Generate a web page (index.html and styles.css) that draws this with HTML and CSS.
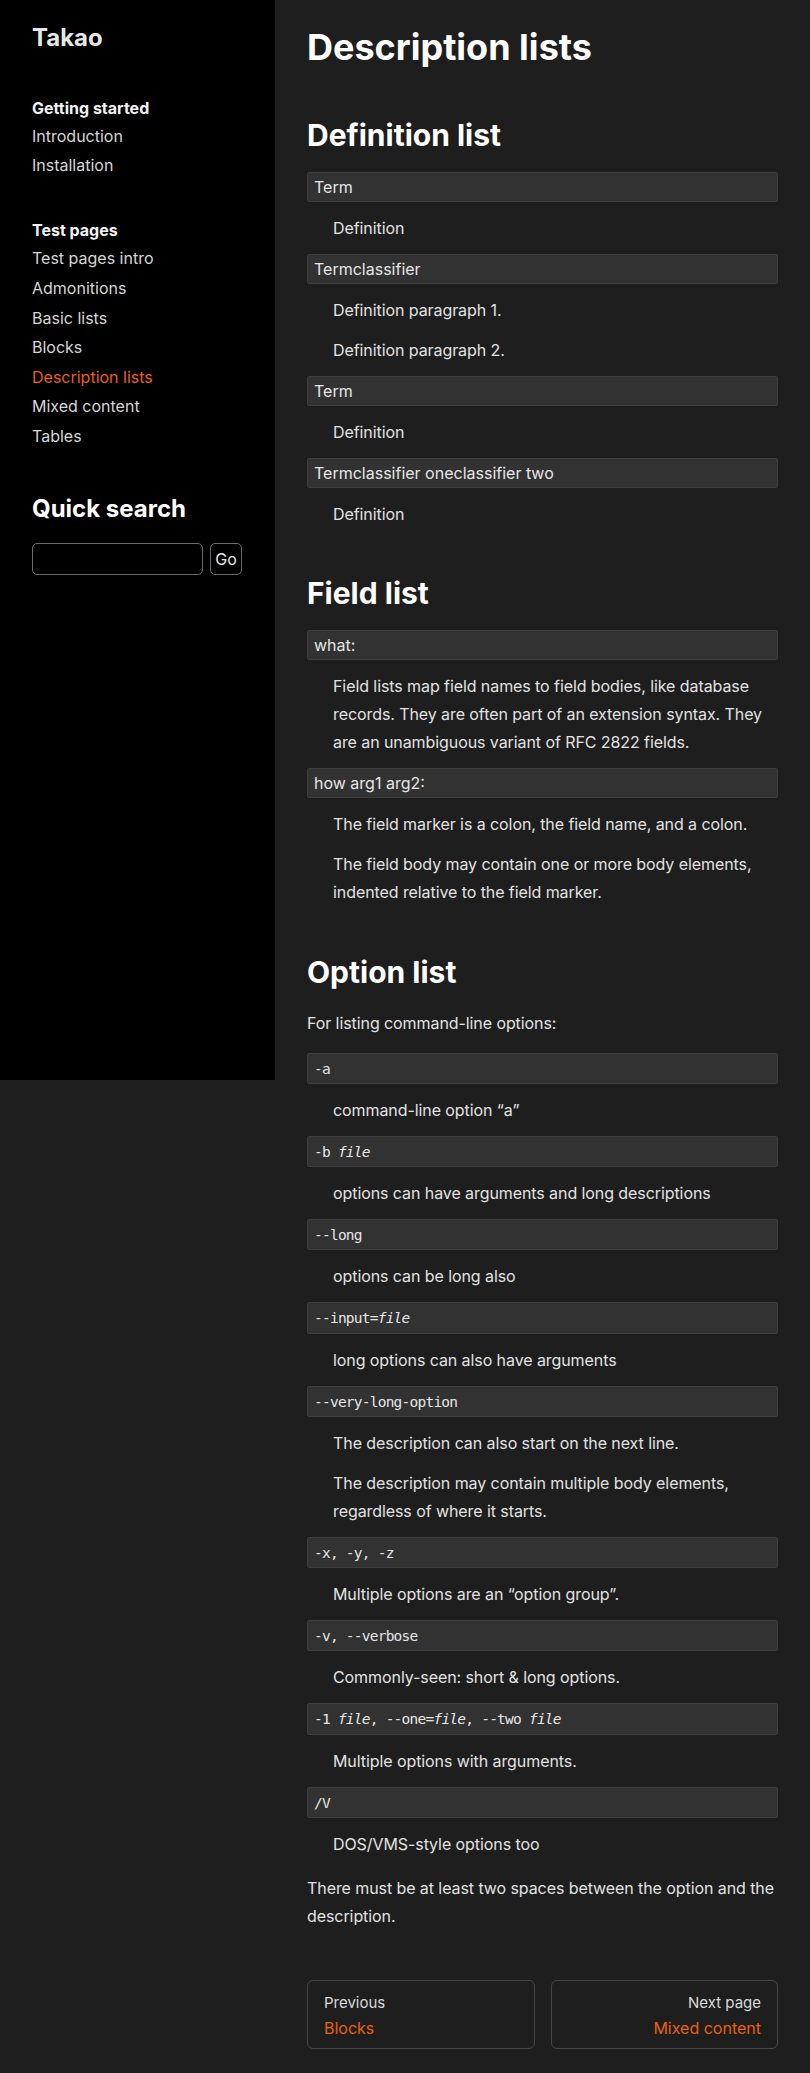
FILE: index.html
```html
<!DOCTYPE html>
<html lang="en">
<head>
<meta charset="utf-8">
<title>Description lists - Takao</title>
<link rel="stylesheet" href="styles.css">
</head>
<body>
<div class="layout">
  <aside class="sidebar">
    <div class="brand">Takao</div>
    <nav class="side-nav">
      <div class="nav-group">
        <p class="caption">Getting started</p>
        <ul class="nav-list">
          <li><a href="#">Introduction</a></li>
          <li><a href="#">Installation</a></li>
        </ul>
      </div>
      <div class="nav-group">
        <p class="caption">Test pages</p>
        <ul class="nav-list">
          <li><a href="#">Test pages intro</a></li>
          <li><a href="#">Admonitions</a></li>
          <li><a href="#">Basic lists</a></li>
          <li><a href="#">Blocks</a></li>
          <li><a href="#" class="current">Description lists</a></li>
          <li><a href="#">Mixed content</a></li>
          <li><a href="#">Tables</a></li>
        </ul>
      </div>
    </nav>
    <h3 class="search-title">Quick search</h3>
    <form class="search">
      <input class="search-input" type="text" aria-label="Search">
      <button class="search-btn" type="button">Go</button>
    </form>
  </aside>

  <main class="content">
    <h1>Description lists</h1>

    <h2>Definition list</h2>
    <dl class="dlist">
      <dt>Term</dt>
      <dd><p>Definition</p></dd>
      <dt>Termclassifier</dt>
      <dd><p>Definition paragraph 1.</p><p>Definition paragraph 2.</p></dd>
      <dt>Term</dt>
      <dd><p>Definition</p></dd>
      <dt>Termclassifier oneclassifier two</dt>
      <dd><p>Definition</p></dd>
    </dl>

    <h2>Field list</h2>
    <dl class="dlist">
      <dt>what:</dt>
      <dd><p>Field lists map field names to field bodies, like database records. They are often part of an extension syntax. They are an unambiguous variant of RFC 2822 fields.</p></dd>
      <dt>how arg1 arg2:</dt>
      <dd><p>The field marker is a colon, the field name, and a colon.</p><p>The field body may contain one or more body elements, indented relative to the field marker.</p></dd>
    </dl>

    <h2>Option list</h2>
    <p>For listing command-line options:</p>
    <dl class="dlist options">
      <dt><code>-a</code></dt>
      <dd><p>command-line option “a”</p></dd>
      <dt><code>-b <var>file</var></code></dt>
      <dd><p>options can have arguments and long descriptions</p></dd>
      <dt><code>--long</code></dt>
      <dd><p>options can be long also</p></dd>
      <dt><code>--input=<var>file</var></code></dt>
      <dd><p>long options can also have arguments</p></dd>
      <dt><code>--very-long-option</code></dt>
      <dd><p>The description can also start on the next line.</p><p>The description may contain multiple body elements, regardless of where it starts.</p></dd>
      <dt><code>-x, -y, -z</code></dt>
      <dd><p>Multiple options are an “option group”.</p></dd>
      <dt><code>-v, --verbose</code></dt>
      <dd><p>Commonly-seen: short &amp; long options.</p></dd>
      <dt><code>-1 <var>file</var>, --one=<var>file</var>, --two <var>file</var></code></dt>
      <dd><p>Multiple options with arguments.</p></dd>
      <dt><code>/V</code></dt>
      <dd><p>DOS/VMS-style options too</p></dd>
    </dl>
    <p>There must be at least two spaces between the option and the description.</p>

    <nav class="pager">
      <a class="pager-link prev" href="#">
        <span class="pager-label">Previous</span>
        <span class="pager-title">Blocks</span>
      </a>
      <a class="pager-link next" href="#">
        <span class="pager-label">Next page</span>
        <span class="pager-title">Mixed content</span>
      </a>
    </nav>
  </main>
</div>
</body>
</html>
```

FILE: styles.css
```css
html, body {
  margin: 0;
  padding: 0;
}

body {
  background: #1e1e1e;
  color: #e2e2e2;
  font-family: Inter, "Noto Sans", "Liberation Sans", sans-serif;
  font-size: 16px;
  line-height: 28px;
}

a {
  color: inherit;
  text-decoration: none;
}

.layout {
  display: flex;
  align-items: flex-start;
}

/* Sidebar */
.sidebar {
  flex: 0 0 275px;
  width: 275px;
  height: 1080px;
  box-sizing: border-box;
  padding: 24px 32px 0;
  background: #000;
}

.brand {
  font-size: 24px;
  font-weight: 700;
  line-height: 28.8px;
  color: #e6e6e6;
  margin-bottom: 41px;
}

.nav-group + .nav-group {
  margin-top: 35.5px;
}

.caption {
  margin: 0;
  font-weight: 700;
  line-height: 28px;
  color: #f2f2f2;
}

.nav-list {
  list-style: none;
  margin: 0;
  padding: 0;
}

.nav-list li {
  line-height: 29.6px;
}

.nav-list a {
  color: #d6d6d6;
}

.nav-list a.current {
  color: #e8620c;
}

.search-title {
  margin: 43px 0 20px;
  font-size: 24px;
  font-weight: 700;
  line-height: 28.8px;
  color: #fff;
}

.search {
  display: flex;
  gap: 7px;
  margin: 0;
}

.search-input {
  width: 171px;
  height: 32px;
  box-sizing: border-box;
  background: #000;
  border: 1px solid #6a6a6a;
  border-radius: 5px;
  color: #e2e2e2;
  padding: 0 6px;
  font: inherit;
}

.search-btn {
  width: 32px;
  height: 32px;
  box-sizing: border-box;
  background: #000;
  border: 1px solid #6a6a6a;
  border-radius: 5px;
  color: #e6e6e6;
  padding: 0;
  font-family: Inter, "Noto Sans", sans-serif;
  font-size: 16px;
}

/* Content */
.content {
  flex: 1;
  min-width: 0;
  padding: 26px 32px 25px;
}

.content p,
.content dd {
  letter-spacing: -0.08px;
}

h1 {
  margin: 0;
  font-size: 36px;
  line-height: 43.2px;
  font-weight: 700;
  color: #fff;
}

h2 {
  margin: 47.5px 0 19px;
  font-size: 30px;
  line-height: 36px;
  font-weight: 700;
  color: #fff;
}

p {
  margin: 12px 0;
}

.dlist {
  margin: 16px 0;
}

.dlist dt {
  margin: 12px 0;
  padding: 0 6px;
  background: #323232;
  border: 1px solid #3e3e3e;
  border-radius: 2px;
  line-height: 28px;
  color: #e6e6e6;
}

.dlist dd {
  margin: 12px 0 12px 26px;
}

.options dt {
  height: 29.25px;
  line-height: 29.25px;
}

code {
  font-family: "DejaVu Sans Mono", "Liberation Mono", monospace;
  font-size: 14.5px;
  line-height: 1;
  letter-spacing: -0.77px;
  color: #e6e6e6;
}

var {
  font-style: italic;
}

/* Pager */
.pager {
  display: flex;
  gap: 16px;
  margin-top: 50px;
}

.pager-link {
  flex: 1;
  display: flex;
  flex-direction: column;
  padding: 9px 16px 7px;
  border: 1px solid #464646;
  border-radius: 6px;
}

.pager-link.next {
  align-items: flex-end;
}

.pager-label {
  font-size: 15px;
  line-height: 25px;
  color: #dadada;
}

.pager-title {
  line-height: 26px;
  color: #e8620c;
}
```
